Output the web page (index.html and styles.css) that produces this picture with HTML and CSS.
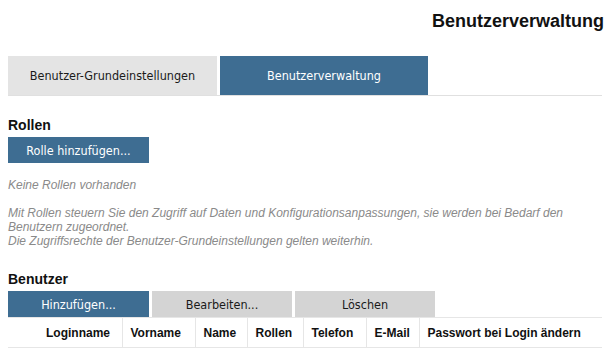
FILE: index.html
```html
<!DOCTYPE html>
<html lang="de">
<head>
  <meta charset="UTF-8">
  <meta name="viewport" content="width=device-width, initial-scale=1.0">
  <title>Benutzerverwaltung</title>
  <link rel="stylesheet" href="styles.css">
</head>
<body>
  <div class="page">
    <h1 class="page-title">Benutzerverwaltung</h1>

    <nav class="tabs">
      <span class="tab">Benutzer-Grundeinstellungen</span>
      <span class="tab active">Benutzerverwaltung</span>
    </nav>

    <section class="roles">
      <h2 class="section-title">Rollen</h2>
      <div class="button-row">
        <button class="btn primary">Rolle hinzufügen...</button>
      </div>
      <p class="hint empty">Keine Rollen vorhanden</p>
      <p class="hint">Mit Rollen steuern Sie den Zugriff auf Daten und Konfigurationsanpassungen, sie werden bei Bedarf den Benutzern zugeordnet.<br>Die Zugriffsrechte der Benutzer-Grundeinstellungen gelten weiterhin.</p>
    </section>

    <section class="users">
      <h2 class="section-title">Benutzer</h2>
      <div class="button-row">
        <button class="btn primary">Hinzufügen...</button>
        <button class="btn">Bearbeiten...</button>
        <button class="btn">Löschen</button>
      </div>
      <table class="user-table">
        <thead>
          <tr>
            <th class="col-select"></th>
            <th class="col-login">Loginname</th>
            <th class="col-first">Vorname</th>
            <th class="col-name">Name</th>
            <th class="col-roles">Rollen</th>
            <th class="col-phone">Telefon</th>
            <th class="col-mail">E-Mail</th>
            <th>Passwort bei Login ändern</th>
          </tr>
        </thead>
        <tbody></tbody>
      </table>
    </section>
  </div>
</body>
</html>
```

FILE: styles.css
```css
* {
  margin: 0px;
  padding: 0px;
  box-sizing: border-box;
}
body {
  font-family: "Liberation Sans", Arial, sans-serif;
  color: #111;
  background-color: white;
}
.page {
  padding: 10px 13px 0px 8px;
}
.page-title {
  font-size: 18px;
  line-height: 22px;
  font-weight: 700;
  text-align: right;
  margin-right: -2px;
}
.tabs {
  display: flex;
  gap: 3px;
  margin-top: 24px;
  border-bottom: 1px solid #e0e0e0;
}
.tab {
  width: 209px;
  height: 39px;
  line-height: 39px;
  text-align: center;
  font-family: "DejaVu Sans Condensed", "DejaVu Sans", sans-serif;
  font-size: 12.5px;
  color: #1a1a1a;
  background-color: #e4e4e4;
}
.tab.active {
  width: 208px;
  color: white;
  background-color: #3e6d92;
}
.roles {
  margin-top: 21px;
}
.section-title {
  font-size: 14px;
  line-height: 17px;
  font-weight: 700;
}
.button-row {
  display: flex;
  gap: 3px;
  margin-top: 3px;
}
.btn {
  width: 140px;
  height: 26px;
  border: none;
  font-family: "DejaVu Sans Condensed", "DejaVu Sans", sans-serif;
  font-size: 12.5px;
  color: #1a1a1a;
  background-color: #d4d4d4;
  cursor: pointer;
}
.btn.primary {
  width: 141px;
  color: white;
  background-color: #3e6d92;
}
.hint {
  font-size: 12px;
  line-height: 14px;
  font-style: italic;
  color: #8a8a8a;
  margin-top: 14px;
}
.hint.empty {
  margin-top: 15px;
}
.users {
  margin-top: 23px;
}
.user-table {
  width: 100%;
  table-layout: fixed;
  border-collapse: collapse;
  border-top: 1px solid #e6e6e6;
  border-bottom: 1px solid #e6e6e6;
}
.user-table th {
  height: 30px;
  padding: 0px 0px 0px 8px;
  text-align: left;
  font-size: 12px;
  font-weight: 700;
  white-space: nowrap;
  border-left: 1px solid #e6e6e6;
}
.user-table th.col-select {
  width: 30px;
  border-left: none;
}
.user-table th.col-login {
  width: 84px;
  border-left: none;
}
.col-first {width: 73px;}
.col-name {width: 52px;}
.col-roles {width: 56px;}
.col-phone {width: 63px;}
.col-mail {width: 53px;}
```
